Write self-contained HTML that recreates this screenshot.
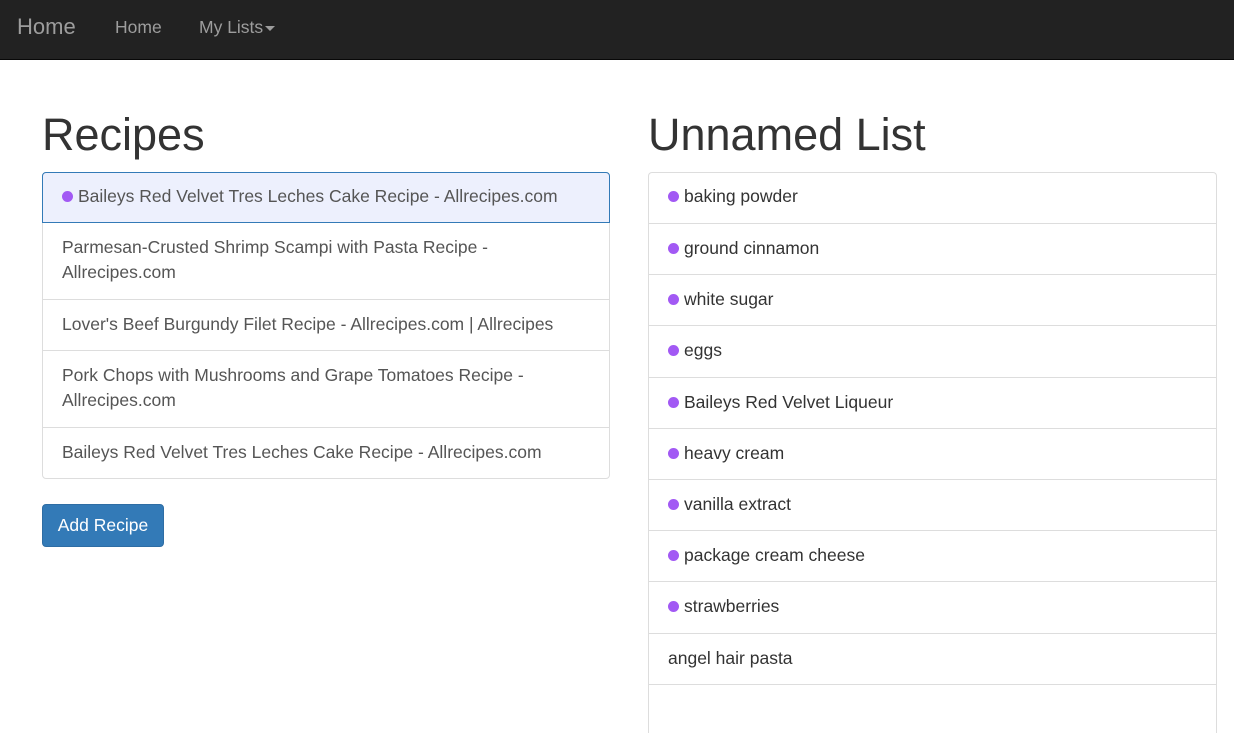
<!DOCTYPE html><html><head><style>
body{margin:0;width:1234px;height:692px;overflow:hidden;background:#fff;font-family:"Liberation Sans",sans-serif;font-size:17.5px;color:#333;position:relative}
.nav{position:absolute;left:0;top:0;width:1234px;height:59px;background:#222;border-bottom:1px solid #080808}
.nav span{position:absolute;top:0;line-height:55px;color:#9d9d9d}
h1{position:absolute;margin:0;font-weight:400;font-size:45px;line-height:50px;top:110px;color:#333}
.list{position:absolute;top:172px;width:566px;border:1px solid #ddd;border-radius:4px}
.it{box-sizing:border-box;border-top:1px solid #ddd;padding:12px 18px 0 19px;line-height:25px;color:#555}
.it:first-child{border-top:0}
.dot{display:inline-block;width:11px;height:11px;border-radius:50%;background:#a259f4;margin-right:5px;vertical-align:0px}
.act{background:#edf0fd;border:1px solid #337ab7!important;border-radius:4px 4px 0 0;margin:-1px -1px 0 -1px;padding-left:19px;padding-top:12px}
.r .it{color:#333;height:51.2px}
.r .it:first-child{height:50px;padding-top:11px}
.btn{position:absolute;left:42px;top:504px;width:122px;height:43px;box-sizing:border-box;background:#337ab7;border:1px solid #2e6da4;border-radius:4px;color:#fff;text-align:center;line-height:41px}
</style></head><body>
<div class="nav"><span style="left:17px;font-size:22px;line-height:54px">Home</span><span style="left:115px">Home</span><span style="left:199px">My Lists<span style="position:relative;display:inline-block;width:0;height:0;border-left:5px solid transparent;border-right:5px solid transparent;border-top:5px solid #9d9d9d;vertical-align:middle;margin-left:2px"></span></span></div>
<h1 style="left:42px">Recipes</h1>
<h1 style="left:648px">Unnamed List</h1>
<div class="list" style="left:42px">
<div class="it act" style="height:51px;padding-top:11px"><span class="dot"></span>Baileys Red Velvet Tres Leches Cake Recipe - Allrecipes.com</div>
<div class="it" style="height:76px;border-top:0">Parmesan-Crusted Shrimp Scampi with Pasta Recipe - Allrecipes.com</div>
<div class="it" style="height:51px">Lover's Beef Burgundy Filet Recipe - Allrecipes.com | Allrecipes</div>
<div class="it" style="height:77px">Pork Chops with Mushrooms and Grape Tomatoes Recipe - Allrecipes.com</div>
<div class="it" style="height:51px">Baileys Red Velvet Tres Leches Cake Recipe - Allrecipes.com</div>
</div>
<div class="btn">Add Recipe</div>
<div class="list r" style="left:648px;width:567px;height:560px;border-bottom:0;border-radius:4px 4px 0 0">
<div class="it"><span class="dot"></span>baking powder</div>
<div class="it"><span class="dot"></span>ground cinnamon</div>
<div class="it"><span class="dot"></span>white sugar</div>
<div class="it"><span class="dot"></span>eggs</div>
<div class="it"><span class="dot"></span>Baileys Red Velvet Liqueur</div>
<div class="it"><span class="dot"></span>heavy cream</div>
<div class="it"><span class="dot"></span>vanilla extract</div>
<div class="it"><span class="dot"></span>package cream cheese</div>
<div class="it"><span class="dot"></span>strawberries</div>
<div class="it">angel hair pasta</div>
<div class="it">&nbsp;</div>
</div>
</body></html>
